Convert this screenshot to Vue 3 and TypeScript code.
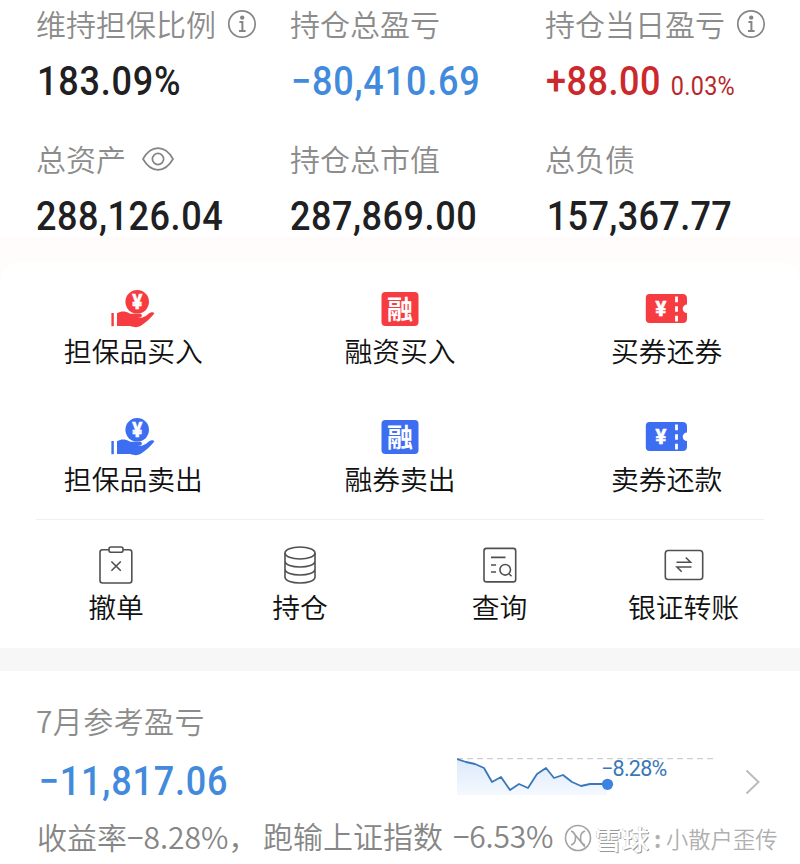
<script setup lang="ts">
interface Metric {
  label: string
  value: string
  tone: string
  note?: string
  icon?: 'info' | 'eye'
}
interface Service {
  label: string
  icon: 'hand' | 'badge' | 'ticket'
  color: string
}
interface Tool {
  label: string
  icon: 'cancel' | 'stack' | 'search' | 'transfer'
}

const metrics: Metric[] = [
  { label: '维持担保比例', value: '183.09%', tone: 'dark ratio', icon: 'info' },
  { label: '持仓总盈亏', value: '−80,410.69', tone: 'blue' },
  { label: '持仓当日盈亏', value: '+88.00', tone: 'red', note: '0.03%', icon: 'info' },
  { label: '总资产', value: '288,126.04', tone: 'dark', icon: 'eye' },
  { label: '持仓总市值', value: '287,869.00', tone: 'dark' },
  { label: '总负债', value: '157,367.77', tone: 'dark debt' },
]

const RED = '#f63c40'
const BLUE = '#3d6df0'
const services: Service[] = [
  { label: '担保品买入', icon: 'hand', color: RED },
  { label: '融资买入', icon: 'badge', color: RED },
  { label: '买券还券', icon: 'ticket', color: RED },
  { label: '担保品卖出', icon: 'hand', color: BLUE },
  { label: '融券卖出', icon: 'badge', color: BLUE },
  { label: '卖券还款', icon: 'ticket', color: BLUE },
]

const tools: Tool[] = [
  { label: '撤单', icon: 'cancel' },
  { label: '持仓', icon: 'stack' },
  { label: '查询', icon: 'search' },
  { label: '银证转账', icon: 'transfer' },
]

const trend: [number, number][] = [
  [0, 2], [9, 5], [18, 7], [27, 11], [35, 25], [44, 20], [53, 33], [62, 27], [71, 31],
  [80, 17], [89, 11], [97, 21], [106, 18], [115, 25], [124, 29], [133, 27], [150, 27],
]
const line = trend.map((p) => p.join(',')).join(' ')
const area = `0,38 ${line} 150,38`
</script>

<template>
  <main class="page">
    <section class="summary">
      <div v-for="m in metrics" :key="m.label" class="metric">
        <div class="metric-label">
          <span>{{ m.label }}</span>
          <svg v-if="m.icon === 'info'" class="info" viewBox="0 0 30 30">
            <circle cx="15" cy="15" r="13.2" />
            <circle class="fill" cx="15.2" cy="8.6" r="2.2" />
            <path d="M12.4 13h3v8.5M12 21.9h6.6" stroke-width="2" />
          </svg>
          <svg v-if="m.icon === 'eye'" class="eye" viewBox="0 0 32 24">
            <path d="M1 12C5 5 10 1.2 16 1.2S27 5 31 12C27 19 22 22.8 16 22.8S5 19 1 12Z" />
            <circle cx="16" cy="12" r="5.6" />
          </svg>
        </div>
        <div class="metric-value" :class="m.tone">
          <span>{{ m.value }}</span><small v-if="m.note">{{ m.note }}</small>
        </div>
      </div>
    </section>

    <section class="card-wrap">
      <div class="card">
        <div class="services">
          <div v-for="s in services" :key="s.label" class="service">
            <svg v-if="s.icon === 'hand'" class="service-icon" viewBox="0 0 46 40" :fill="s.color">
              <circle cx="27.2" cy="12.8" r="11.8" />
              <text class="yuan" x="27.2" y="20" font-size="19.5">¥</text>
              <rect x="1.4" y="24" width="2.4" height="13.2" />
              <path d="M7 24.2C11 22.2 15 21.8 19.5 24.4Q21 25 24 24.8H30C32.4 25.2 32.6 27.6 30.5 28.4L27.5 29C32 29.6 35.5 27.4 38.5 24.8C41 22.8 43.4 22.8 44.4 24.6C41 29 35.5 34 30.5 37C27 38.8 24 38.2 20 37H7Z" />
            </svg>
            <svg v-else-if="s.icon === 'badge'" class="service-icon" viewBox="0 0 46 40" :fill="s.color">
              <rect x="4.5" y="3" width="37" height="34" rx="4" />
              <text class="rong" x="23" y="29.8">融</text>
            </svg>
            <svg v-else class="service-icon" viewBox="0 0 46 40" :fill="s.color">
              <path d="M5.5 5H38.5Q43 5 43 9.5V15.4A4.3 4.3 0 0 0 43 24V29.5Q43 34 38.5 34H5.5Q1.8 34 1.8 30V9Q1.8 5 5.5 5Z" />
              <path d="M32.5 7.6V32.4" stroke="#fff" stroke-width="2.8" stroke-dasharray="5.6 4" />
              <text class="yuan" x="17" y="27" font-size="21">¥</text>
            </svg>
            <span class="service-label">{{ s.label }}</span>
          </div>
        </div>

        <div class="tools">
          <div v-for="t in tools" :key="t.label" class="tool">
            <svg v-if="t.icon === 'cancel'" class="tool-icon" viewBox="0 0 40 40">
              <path d="M13 4.7H6.5Q4 4.7 4 7.2V35.5Q4 38 6.5 38H33.3Q35.8 38 35.8 35.5V7.2Q35.8 4.7 33.3 4.7H27" />
              <rect x="13" y="2" width="14" height="5.2" rx="2" />
              <path d="M15.4 16.5L24.8 25.8M24.8 16.5L15.4 25.8" />
            </svg>
            <svg v-else-if="t.icon === 'stack'" class="tool-icon" viewBox="0 0 40 40">
              <ellipse cx="20" cy="8" rx="15" ry="6" />
              <path d="M5 8V32C5 40 35 40 35 32V8M5 16C5 24 35 24 35 16M5 24C5 32 35 32 35 24" />
            </svg>
            <svg v-else-if="t.icon === 'search'" class="tool-icon" viewBox="0 0 40 40">
              <rect x="4" y="3.4" width="31.7" height="33.5" rx="2.5" />
              <path d="M11 12.4H25.5M11 20H16M11 27H16M29.2 29L31.5 31.3" />
              <circle cx="25.2" cy="24.8" r="5.3" />
            </svg>
            <svg v-else class="tool-icon" viewBox="0 0 40 40">
              <rect x="1.3" y="5.5" width="37.4" height="29" rx="3" />
              <path d="M12.5 17.2H26.5L21.8 12.5M27.5 22H13L17.7 26.7" />
            </svg>
            <span class="service-label">{{ t.label }}</span>
          </div>
        </div>
      </div>
    </section>

    <section class="monthly">
      <h2 class="monthly-title">7月参考盈亏</h2>
      <div class="monthly-row">
        <div class="monthly-amount">
          <div class="metric-value blue">−11,817.06</div>
        </div>
        <svg class="chart" viewBox="0 0 262 48">
          <defs>
            <linearGradient id="trendFill" x1="0" y1="0" x2="0" y2="1">
              <stop offset="0" stop-color="#dce9fb" />
              <stop offset="1" stop-color="#f5f9ff" />
            </linearGradient>
          </defs>
          <polygon :points="area" fill="url(#trendFill)" />
          <path d="M0 1.7H260" stroke="#cfcdcd" stroke-width="1.2" stroke-dasharray="6 4" />
          <polyline :points="line" fill="none" stroke="#3977b8" stroke-width="1.8" stroke-linejoin="round" />
          <circle cx="150.5" cy="27.3" r="5.6" fill="#3c82df" />
          <text x="144" y="19" class="chart-label">−8.28%</text>
        </svg>
        <svg class="chevron" viewBox="0 0 16 26"><path d="M1.5 1.5L13.5 13L1.5 24.5" /></svg>
      </div>
      <div class="monthly-foot">
        <span class="rate">收益率−8.28%，</span>
        <span class="versus">跑输上证指数</span>
        <span class="index">−6.53%</span>
        <div class="watermark">
          <svg viewBox="0 0 30 30">
            <circle cx="15" cy="15" r="12.5" />
            <path d="M8 8C14 10 14 20 8 22M22 8C16 10 16 20 22 22M9 8L22 24" />
          </svg>
          <b>雪球</b><span class="colon">:</span><span>小散户歪传</span>
        </div>
      </div>
    </section>
  </main>
</template>

<style>
body {
  background: #fff;
}
</style>

<style scoped>
.page {
  width: 800px;
  height: 864px;
  overflow: hidden;
  background: #fff;
  color: #111;
  font-family: 'Noto Sans CJK SC', sans-serif;
  font-weight: 300;
  white-space: nowrap;
}
.summary {
  display: grid;
  grid-template-columns: 254px 255px 1fr;
  grid-template-rows: 135px 102px;
  height: 237px;
  padding-left: 36px;
}
.metric-label {
  display: flex;
  align-items: center;
  height: 50px;
  font-size: 30px;
  font-weight: 350;
  color: #8c8c8c;
}
.metric-label span {
  height: 50px;
  line-height: 46px;
}
.metric-label svg,
.tool-icon {
  fill: none;
  stroke: #858585;
  stroke-width: 1.7;
}
.metric-label .fill {
  fill: #858585;
  stroke: none;
}
.info {
  width: 30px;
  height: 30px;
  margin: -2px 0 0 11px;
}
.eye {
  width: 32px;
  height: 24px;
  margin: -2px 0 0 16px;
}
.metric-value {
  width: max-content;
  height: 64px;
  line-height: 63px;
  font-family: Roboto, sans-serif;
  font-weight: 500;
  font-size: 40px;
  letter-spacing: 0.6px;
  transform: scaleX(0.9);
  transform-origin: left;
}
.dark {
  color: #202022;
}
.ratio {
  padding-left: 1px;
  letter-spacing: 0.9px;
}
.debt {
  padding-left: 2px;
  letter-spacing: 0.4px;
}
.blue {
  padding-left: 1px;
  letter-spacing: 0.9px;
  color: #428adb;
}
.red {
  padding-left: 1px;
  color: #cc292c;
}
.metric-value small {
  margin-left: 11px;
  font-size: 26px;
  font-weight: 400;
  letter-spacing: 0.3px;
  color: #b5282d;
}
.card-wrap {
  height: 386px;
  padding-top: 25px;
  background: linear-gradient(#fffbfb, #fffdfd 60px, #fff 61px);
}
.card {
  height: 386px;
  border-radius: 20px 20px 0 0;
  background: #fff;
}
.services {
  display: grid;
  grid-template-columns: repeat(3, 1fr);
  grid-template-rows: 128px 128px;
  box-sizing: border-box;
  height: 255px;
  padding-top: 27px;
}
.service,
.tool {
  display: flex;
  flex-direction: column;
  align-items: center;
}
.service-icon {
  width: 46px;
  height: 40px;
}
.yuan {
  fill: #fff;
  stroke: #fff;
  stroke-width: 0.3;
  font-family: Roboto, sans-serif;
  font-weight: 800;
  text-anchor: middle;
}
.rong {
  fill: #fff;
  font-size: 26px;
  font-weight: 700;
  text-anchor: middle;
}
.service-label {
  height: 44px;
  line-height: 43px;
  font-size: 27.8px;
  font-weight: 350;
}
.tools {
  display: grid;
  grid-template-columns: 184px 184px 215px 153px;
  margin: 2px 36px 0;
  padding-top: 25px;
  border-top: 1px solid #efefef;
}
.tool {
  position: relative;
  left: -12px;
}
.tool-icon {
  width: 42px;
  height: 40px;
  stroke: #505050;
  stroke-width: 1.6;
}
.monthly {
  padding: 26px 0 0 36px;
  border-top: 23px solid #f7f7f7;
}
.monthly-title {
  margin: 0;
  height: 50px;
  line-height: 46px;
  font-size: 30px;
  font-weight: 350;
  letter-spacing: 0.4px;
  color: #8c8c8c;
}
.monthly-row {
  display: flex;
  height: 68px;
}
.monthly-amount {
  width: 421px;
}
.monthly-amount .metric-value {
  padding-left: 3px;
  line-height: 70px;
}
.chart {
  width: 262px;
  height: 48px;
  margin-top: 10px;
}
.chart-label {
  font: 400 21.5px Roboto, sans-serif;
  letter-spacing: -0.75px;
  fill: #3977b8;
}
.chevron {
  width: 16px;
  height: 26px;
  margin: 22px 0 0 26px;
  fill: none;
  stroke: #bcbcbc;
  stroke-width: 2;
}
.monthly-foot {
  display: flex;
  height: 44px;
  line-height: 41px;
  font-size: 30px;
  font-weight: 350;
  color: #868686;
}
.rate {
  width: 226px;
  padding: 1px 0 0 1px;
}
.versus {
  width: 190px;
}
.index {
  width: 110px;
  letter-spacing: -0.2px;
}
.watermark {
  display: flex;
  align-items: center;
  height: 46px;
  font-size: 22.3px;
  color: #b0b0b0;
}
.watermark svg {
  width: 30px;
  height: 30px;
  fill: none;
  stroke: #a4a4a4;
  stroke-width: 1.6;
}
.watermark b {
  margin-left: 2px;
  font-size: 27px;
  font-weight: 500;
  color: #fff;
  text-shadow: 1px 1px 0 #999, -0.5px -0.5px 0 #c8c8c8;
}
.colon {
  width: 17px;
  text-align: center;
  font-weight: 700;
}
</style>
